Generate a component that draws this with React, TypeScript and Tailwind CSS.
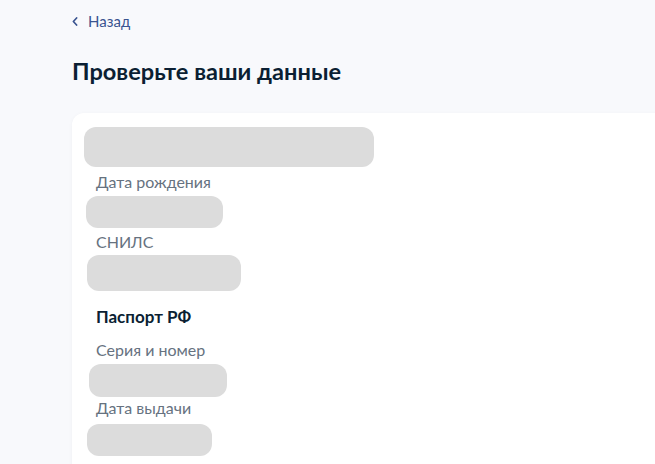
import React from 'react';

const font = { fontFamily: 'Lato, "Noto Sans", sans-serif' };

const Bar: React.FC<{ className: string }> = ({ className }) => (
  <div className={`rounded-[12px] bg-[#dcdcdc] ${className}`} />
);

const Label: React.FC<{ children: React.ReactNode; className?: string }> = ({ children, className = '' }) => (
  <div className={`ml-[12px] text-[16px] leading-[20px] text-[#66727f] ${className}`}>{children}</div>
);

const App: React.FC = () => {
  return (
    <div className="h-[464px] w-full overflow-hidden bg-[#f8f9fc]" style={font}>
      <div className="pl-[72px] pt-[11px]">
        {/* Back link */}
        <a href="#" className="flex items-center text-[15px] leading-[20px] text-[#3a5490]">
          <svg width="6" height="9" viewBox="0 0 6 9" className="mr-[10px] mt-[1px]">
            <path d="M4.6 1L1.4 4.5L4.6 8" fill="none" stroke="#3a5490" strokeWidth="1.7" strokeLinecap="round" strokeLinejoin="round" />
          </svg>
          Назад
        </a>

        <h1 className="mt-[24px] text-[23.6px] font-bold leading-[32px] text-[#0b1f33]">Проверьте ваши данные</h1>

        {/* Card */}
        <div className="mt-[26px] w-[720px] rounded-[12px] bg-white pb-[24px] pl-[12px] pt-[14px] shadow-[0_1px_4px_rgba(11,31,51,0.04)]">
          <Bar className="h-[40px] w-[290px]" />
          <Label className="mt-[5px]">Дата рождения</Label>
          <Bar className="ml-[2px] mt-[4px] h-[32px] w-[137px]" />
          <Label className="mt-[4px]">СНИЛС</Label>
          <Bar className="ml-[3px] mt-[3px] h-[36px] w-[154px]" />
          <div className="ml-[12px] mt-[16px] text-[17px] font-bold leading-[20px] text-[#0b1f33]">Паспорт РФ</div>
          <Label className="mt-[13px]">Серия и номер</Label>
          <Bar className="ml-[5px] mt-[4px] h-[33px] w-[138px]" />
          <Label className="mt-[1px]">Дата выдачи</Label>
          <Bar className="ml-[3px] mt-[6px] h-[32px] w-[125px]" />
          <Label className="mt-[4px]">Кем выдан</Label>
        </div>
      </div>
    </div>
  );
};

export default App;
